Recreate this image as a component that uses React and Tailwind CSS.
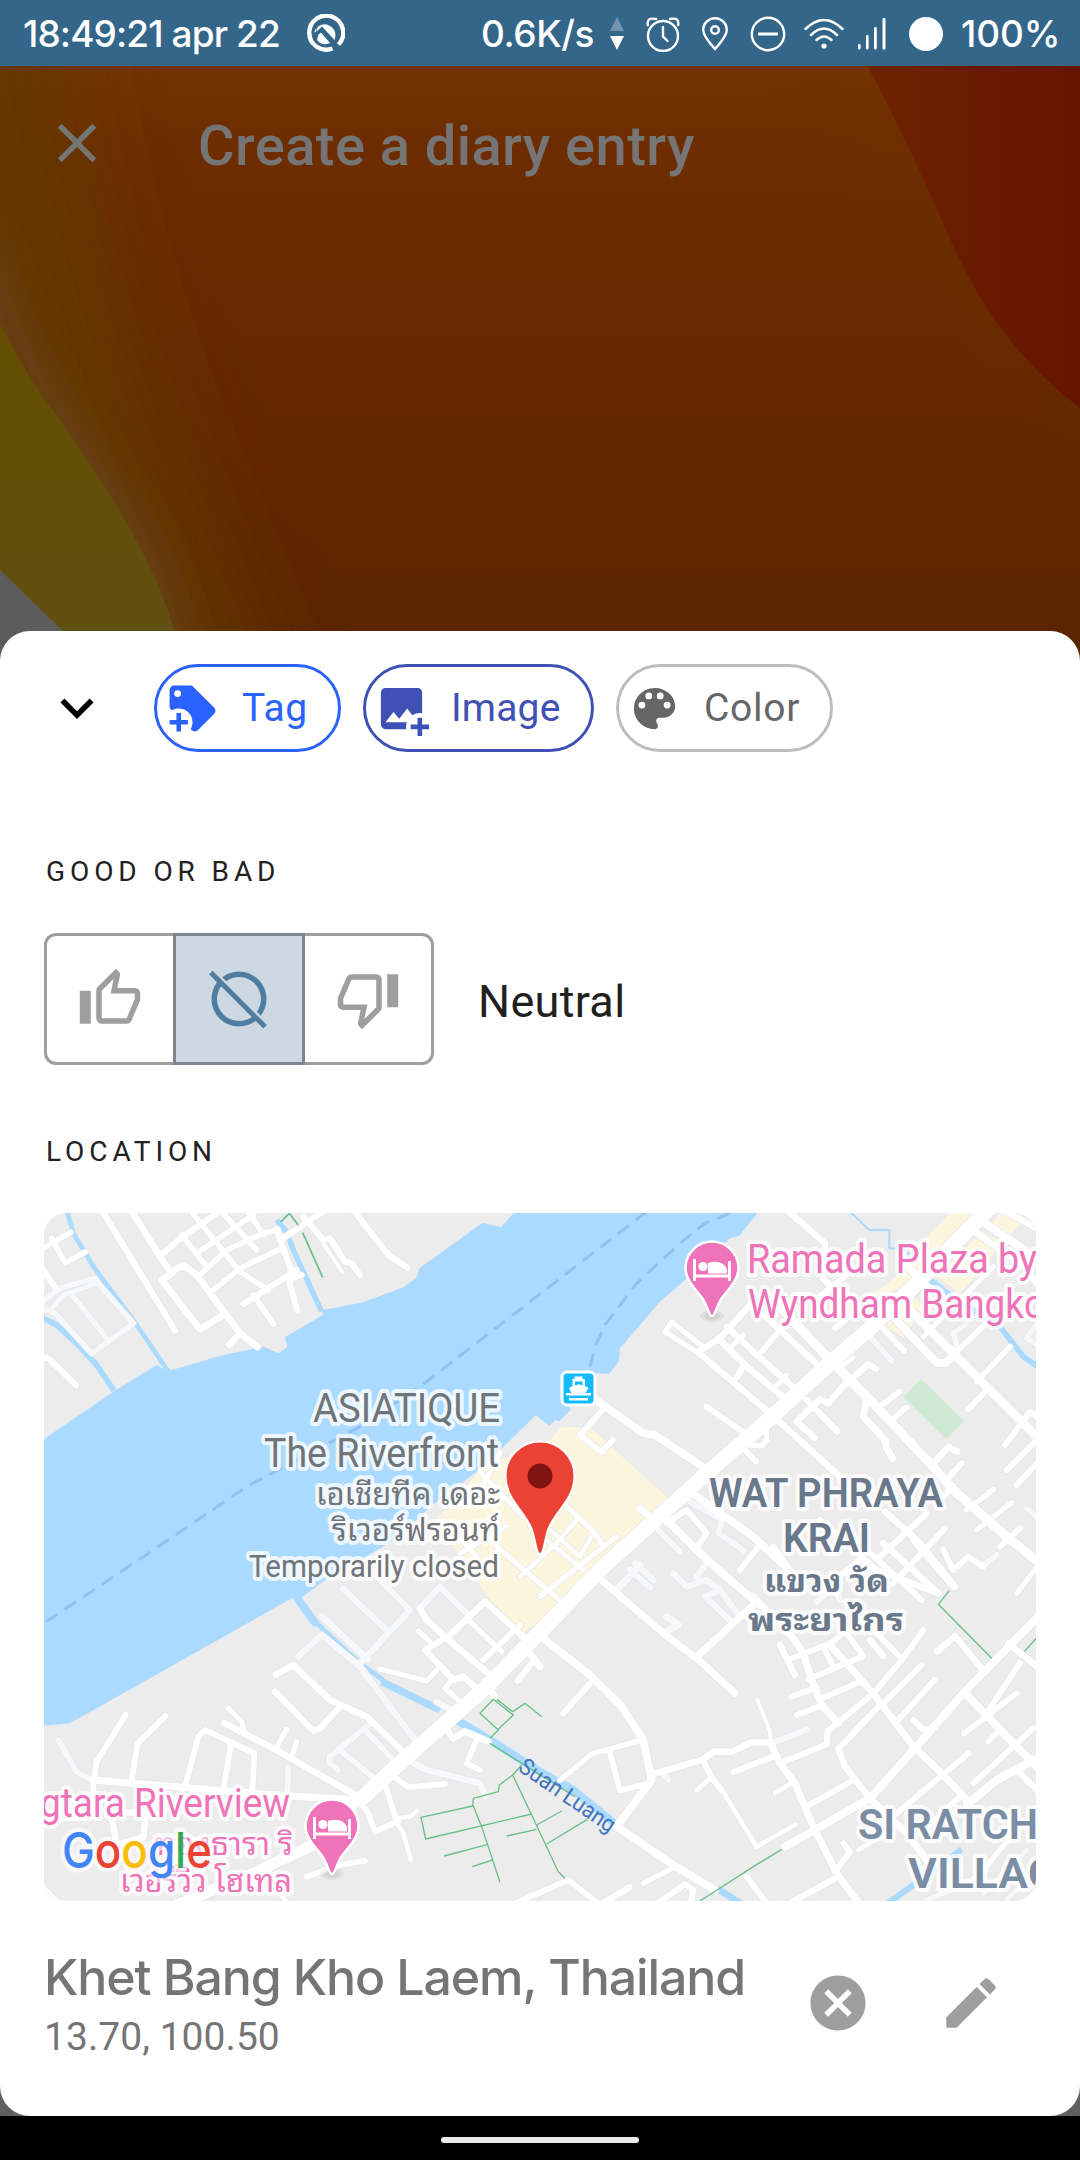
import React from "react";

const ICONS = {
  tagPlus:
    "M21.41,11.58L12.41,2.58C12.04,2.21 11.53,2 11,2H4A2,2 0 0,0 2,4V11C2,11.53 2.21,12.04 2.59,12.41L3,12.81C3.9,12.27 4.94,12 6,12A6,6 0 0,1 12,18C12,19.06 11.72,20.09 11.18,21L11.58,21.4C11.95,21.78 12.47,22 13,22C13.53,22 14.04,21.79 14.41,21.41L21.41,14.41C21.79,14.04 22,13.53 22,13C22,12.47 21.79,11.96 21.41,11.58M5.5,7A1.5,1.5 0 0,1 4,5.5A1.5,1.5 0 0,1 5.5,4A1.5,1.5 0 0,1 7,5.5A1.5,1.5 0 0,1 5.5,7M10,19H7V22H5V19H2V17H5V14H7V17H10V19Z",
  imagePlus:
    "M5,3A2,2 0 0,0 3,5V19A2,2 0 0,0 5,21H14.09C14.03,20.67 14,20.34 14,20C14,19.32 14.12,18.64 14.35,18H5L8.5,13.5L11,16.5L14.5,12L16.73,14.97C17.7,14.34 18.84,14 20,14C20.34,14 20.67,14.03 21,14.09V5C21,3.89 20.1,3 19,3H5M19,16V19H16V21H19V24H21V21H24V19H21V16H19Z",
  palette:
    "M17.5,12A1.5,1.5 0 0,1 16,10.5A1.5,1.5 0 0,1 17.5,9A1.5,1.5 0 0,1 19,10.5A1.5,1.5 0 0,1 17.5,12M14.5,8A1.5,1.5 0 0,1 13,6.5A1.5,1.5 0 0,1 14.5,5A1.5,1.5 0 0,1 16,6.5A1.5,1.5 0 0,1 14.5,8M9.5,8A1.5,1.5 0 0,1 8,6.5A1.5,1.5 0 0,1 9.5,5A1.5,1.5 0 0,1 11,6.5A1.5,1.5 0 0,1 9.5,8M6.5,12A1.5,1.5 0 0,1 5,10.5A1.5,1.5 0 0,1 6.5,9A1.5,1.5 0 0,1 8,10.5A1.5,1.5 0 0,1 6.5,12M12,3A9,9 0 0,0 3,12A9,9 0 0,0 12,21A1.5,1.5 0 0,0 13.5,19.5C13.5,19.11 13.35,18.76 13.11,18.5C12.88,18.23 12.73,17.88 12.73,17.5A1.5,1.5 0 0,1 14.23,16H16A5,5 0 0,0 21,11C21,6.58 16.97,3 12,3Z",
  thumbUp:
    "M5,9V21H1V9H5M9,21A2,2 0 0,1 7,19V9C7,8.45 7.22,7.95 7.59,7.59L14.17,1L15.23,2.06C15.5,2.33 15.67,2.7 15.67,3.11L15.64,3.43L14.69,8H21C22.11,8 23,8.9 23,10V12C23,12.26 22.95,12.5 22.86,12.73L19.84,19.78C19.54,20.5 18.83,21 18,21H9M9,19H18.03L21,12V10H12.21L13.34,4.68L9,9.03V19Z",
  thumbDown:
    "M19,15V3H23V15H19M15,3A2,2 0 0,1 17,5V15C17,15.55 16.78,16.05 16.41,16.41L9.83,23L8.77,21.94C8.5,21.67 8.33,21.3 8.33,20.88L8.36,20.57L9.31,16H3C1.89,16 1,15.1 1,14V12C1,11.74 1.05,11.5 1.14,11.27L4.16,4.22C4.46,3.5 5.17,3 6,3H15M15,5H5.97L3,12V14H11.78L10.65,19.32L15,14.97V5Z",
  circleOff:
    "M20.84 22.73L18.09 20C16.39 21.23 14.28 22 12 22C6.5 22 2 17.5 2 12C2 9.72 2.77 7.61 4 5.91L1.11 3L2.39 1.73L22.11 21.46L20.84 22.73M12 20C13.73 20 15.33 19.44 16.64 18.5L5.5 7.36C4.56 8.67 4 10.27 4 12A8 8 0 0 0 12 20M12 4C16.42 4 20 7.58 20 12C20 13.73 19.44 15.33 18.5 16.64L19.94 18.09C21.23 16.39 22 14.28 22 12C22 6.5 17.5 2 12 2C9.72 2 7.61 2.77 5.91 4.06L7.36 5.5C8.67 4.56 10.27 4 12 4Z",
  closeCircle:
    "M12,2C17.53,2 22,6.47 22,12C22,17.53 17.53,22 12,22C6.47,22 2,17.53 2,12C2,6.47 6.47,2 12,2M15.59,7L12,10.59L8.41,7L7,8.41L10.59,12L7,15.59L8.41,17L12,13.41L15.59,17L17,15.59L13.41,12L17,8.41L15.59,7Z",
  pencil:
    "M20.71,7.04C21.1,6.65 21.1,6 20.71,5.63L18.37,3.29C18,2.9 17.35,2.9 16.96,3.29L15.12,5.12L18.87,8.87M3,17.25V21H6.75L17.81,9.93L14.06,6.18L3,17.25Z",
  chevronDown: "M7.41,8.58L12,13.17L16.59,8.58L18,10L12,16L6,10L7.41,8.58Z",
  close: "M19,6.41L17.59,5L12,10.59L6.41,5L5,6.41L10.59,12L5,17.59L6.41,19L12,13.41L17.59,19L19,17.59L13.41,12L19,6.41Z",
};

function Icon({ name, className }) {
  return (
    <svg viewBox="0 0 24 24" fill="currentColor" className={className}>
      <path d={ICONS[name]} />
    </svg>
  );
}

function StatusBar() {
  return (
    <header className="flex h-[66px] shrink-0 items-center bg-[#34668a] pt-px font-['Inter'] text-[37px] font-[550] text-white">
      <span className="ml-[23px] w-[262px] whitespace-nowrap tracking-[-0.9px]">18:49:21 apr 22</span>
      <svg viewBox="0 0 40 40" className="ml-5 size-10" fill="none" stroke="#fff">
        <path d="M27.5 34.5 A17 17 0 1 1 33.5 30.5" strokeWidth="4.4" />
        <g fill="#fff" stroke="none">
          <path d="M12.5 13 A11 11 0 0 1 30.5 22 L29.5 26 L17 12.5 L11.5 17.5 Z" />
          <path d="M13.5 20.5 L16 18.5 L25 29 Q17 32.5 12 26 Z" />
          <path d="M9.2 18.5 Q10 15 11.6 14.2 L10.8 18Z" />
        </g>
      </svg>
      <span className="ml-[136px] w-[115px] whitespace-nowrap tracking-[-0.4px]">0.6K/s</span>
      <svg viewBox="0 0 14 34" className="ml-[14px] h-[34px] w-[14px]" fill="#fff">
        <path d="M7 0 L14 14 H0Z" opacity=".3" />
        <path d="M0 19 H14 L7 33Z" />
      </svg>
      <svg viewBox="0 0 34 36" className="ml-[22px] h-9 w-[34px]" fill="none" stroke="#fff" strokeWidth="2.4" strokeLinecap="round">
        <circle cx="17" cy="20" r="15" />
        <path d="M17 11 V20.5 L21.5 25 M1.8 9 Q0.5 1 10 3 M32.2 9 Q33.5 1 24 3" />
      </svg>
      <svg viewBox="0 0 26 34" className="ml-[22px] h-[34px] w-[26px]" fill="none" stroke="#fff" strokeWidth="2.4">
        <path d="M13 32 Q1.2 19 1.2 13 A11.8 11.8 0 0 1 24.8 13 Q24.8 19 13 32Z" />
        <circle cx="13" cy="13" r="3.8" />
      </svg>
      <svg viewBox="0 0 36 36" className="ml-[22px] size-9" fill="none" stroke="#fff" strokeWidth="2.4">
        <circle cx="18" cy="18" r="16.2" />
        <path d="M8 18 H28" strokeWidth="3" />
      </svg>
      <svg viewBox="0 0 40 32" className="ml-[18px] h-8 w-10" fill="none" stroke="#fff" strokeWidth="2.5" strokeLinecap="round">
        <path d="M1.5 11 Q20 -7 38.500 11 M7 17 Q20 4 33 17 M12.500 22 Q20 15 27.500 22" />
        <circle cx="20" cy="28" r="2.6" fill="#fff" stroke="none" />
      </svg>
      <svg viewBox="0 0 28 32" className="ml-[14px] h-8 w-7" fill="#fff">
        <rect y="26" width="2.600" height="5.500" rx="1" />
        <rect x="8" y="17" width="2.600" height="14.500" rx="1" />
        <rect x="16" y="9" width="2.800" height="22.500" rx="1" />
        <rect x="24.500" y="0" width="3" height="31.500" rx="1" />
      </svg>
      <span className="ml-[23px] size-[34px] rounded-full bg-white" />
      <span className="ml-[18px] whitespace-nowrap tracking-[-0.1px]">100%</span>
    </header>
  );
}

function HeroArt() {
  return (
    <svg viewBox="0 66 1080 620" className="absolute inset-0 h-[620px] w-[1080px]">
      <defs>
        <linearGradient id="base" x1="0" y1="0" x2="0" y2="1">
          <stop offset="0" stopColor="#733300" />
          <stop offset=".12" stopColor="#6d2d00" />
          <stop offset=".6" stopColor="#642800" />
          <stop offset="1" stopColor="#5a2400" />
        </linearGradient>
        <linearGradient id="left" x1="0" y1="0" x2="1" y2="0">
          <stop offset="0" stopColor="#683c00" />
          <stop offset="1" stopColor="#683c00" stopOpacity="0" />
        </linearGradient>
        <linearGradient id="right" x1="0" y1="0" x2="0.8" y2="-0.5">
          <stop offset="0.3" stopColor="#6c3300" stopOpacity="0" />
          <stop offset="1" stopColor="#6c3300" stopOpacity=".7" />
        </linearGradient>
        <linearGradient id="red" x1="0" y1="0" x2="1" y2="0">
          <stop offset="0" stopColor="#6e2400" />
          <stop offset=".5" stopColor="#691b00" />
          <stop offset="1" stopColor="#661400" />
        </linearGradient>
        <linearGradient id="olive" x1="0" y1="0" x2="0" y2="1">
          <stop offset="0" stopColor="#634e00" />
          <stop offset="1" stopColor="#605014" />
        </linearGradient>
        <filter id="soft" x="-100%" y="-40%" width="300%" height="180%">
          <feGaussianBlur stdDeviation="48" />
        </filter>
        <filter id="softer" x="-80%" y="-20%" width="260%" height="140%">
          <feGaussianBlur stdDeviation="20" />
        </filter>
      </defs>
      <rect y="66" width="1080" height="620" fill="url(#base)" />
      <rect x="540" y="66" width="540" height="400" fill="url(#right)" />
      <path d="M-40 -60 Q0 240 80 440 T230 800" fill="none" stroke="#633800" strokeWidth="150" filter="url(#soft)" />
      <path d="M-24 240 Q-5 327 36 393 T122 527 Q160 580 170 690" fill="none" stroke="#6a421f" strokeWidth="34" filter="url(#softer)" />
      <path d="M0 323 C20 365 38 390 60 420 C105 485 155 560 174 631 L182 690 H0Z" fill="url(#olive)" />
      <path d="M0 570 L63 631 L120 690 H0Z" fill="#5c5c5c" />
      <path d="M867 66 C893 112 912 155 933 200 C958 258 990 340 1080 408 V66Z" fill="url(#red)" />
    </svg>
  );
}

const TILES = [
  {
    x: 40,
    y: 1200,
    canals: [
      [14, "80,30 100,100 160,200 280,360 385,515"],
      [17, "0,350 50,375 110,430 170,495 222,572"],
      [16, "710,60 740,95 760,150 845,335"],
    ],
    faint: [
      [17, "0,310 60,265 165,235 175,250 280,370 205,425 155,460 45,340 0,322"],
      [15, "35,325 70,285 170,250"],
      [17, "100,290 205,420"],
    ],
    roads: [
      [19, "185,30 405,392"],
      [21, "270,25 360,170 395,220 365,240 480,388 545,348"],
      [21, "395,215 430,195 470,225 600,400 652,440"],
      [19, "600,400 567,435"],
      [19, "360,168 425,112 560,20"],
      [17, "425,105 500,200"],
      [17, "450,30 600,215 685,270"],
      [17, "540,30 650,150"],
      [17, "620,30 672,105"],
      [17, "470,160 640,45"],
      [17, "480,225 560,150 670,100 715,90"],
      [17, "515,275 600,205 725,145"],
      [19, "610,312 770,210"],
      [18, "640,285 700,372"],
      [19, "710,88 730,145 752,205 748,245 772,333"],
      [17, "745,240 785,225"],
      [19, "720,120 790,75 870,20"],
      [19, "790,50 850,120 870,115 915,185 935,190 960,225"],
      [12, "850,130 907,216"],
      [19, "940,30 1045,165 1102,203"],
      [17, "0,150 92,97"],
      [17, "35,115 75,188 135,156"],
      [19, "0,195 45,262"],
      [19, "0,470 25,475 108,556"],
      [15, "1210,960 1310,1070"],
      [15, "1320,815 1450,950"],
      [15, "1260,1060 1400,980"],
      [15, "1250,920 1330,855 1380,760"],
    ],
    paths: [[5, "722,66 748,40 775,76"], [5, "788,98 848,232"]],
  },
  {
    x: 540,
    y: 1200,
    canals: [
      [6, "930,35 988,90 1048,90 1048,145 1105,150 1105,200 1135,220"],
      [17, "1170,240 1250,300 1380,380 1450,470 1500,505"],
    ],
    faint: [
      [18, "990,410 1055,482"],
      [18, "450,905 545,960 535,1000 612,1052"],
      [18, "355,990 420,1055"],
      [16, "1235,460 1250,430 1240,400 1280,370"],
      [16, "1488,375 1460,415 1500,440"],
      [16, "1460,925 1500,960"],
    ],
    roads: [
      [46, "1380,-10 1110,270 990,385 880,480 690,655 500,820 340,965 190,1100 45,1250 -160,1460 -410,1680 -540,1800"],
      [34, "-540,1790 -680,1935 -850,2015 -1100,2120"],
      [20, "735,25 855,130 848,235 880,265"],
      [16, "480,462 375,395 395,366 492,442"],
      [20, "480,462 690,640 900,830"],
      [20, "480,452 540,415 635,310"],
      [20, "535,415 620,500 740,600"],
      [20, "560,380 640,455 775,575"],
      [20, "640,315 860,520"],
      [18, "665,455 720,390"],
      [16, "575,440 610,405"],
      [20, "590,532 612,495"],
      [16, "712,555 740,525"],
      [28, "700,300 890,500 1000,610 1170,790 1240,870 1400,1010 1500,1090"],
      [18, "885,385 1000,290"],
      [18, "840,290 930,215"],
      [24, "1040,330 1190,488 1215,490 1240,465"],
      [26, "1080,170 1160,260"],
      [26, "1110,330 1240,460 1340,560 1500,720"],
      [17, "1215,488 1335,373"],
      [15, "1150,410 1200,360 1300,260 1360,200"],
      [20, "1310,100 1440,190 1500,260"],
      [24, "1320,60 1500,180"],
      [20, "1380,25 1500,90"],
      [17, "1310,545 1410,440"],
      [18, "1340,570 1285,628"],
      [18, "1020,375 1092,452"],
      [20, "915,555 985,492 1008,507"],
      [20, "920,545 865,610 840,597 770,665 825,715"],
      [20, "800,600 892,695"],
      [14, "895,505 940,472"],
      [22, "978,605 970,650 1035,720 1040,745 1058,775"],
      [18, "1020,620 1078,575"],
      [18, "1055,660 1100,622"],
      [18, "500,620 630,710"],
      [17, "630,735 665,738 680,720 678,690"],
      [18, "615,750 648,785"],
      [24, "160,595 310,700 345,705 510,815"],
      [18, "190,628 120,705 185,757 218,720"],
      [22, "300,925 350,970"],
      [20, "1185,785 1225,740 1252,755"],
      [18, "1225,835 1265,790"],
      [18, "1240,858 1205,895"],
      [16, "1310,990 1415,908"],
      [16, "1280,930 1360,868"],
      [18, "1395,735 1470,635 1500,660"],
      [18, "1400,810 1500,710"],
      [18, "1430,855 1500,780"],
      [24, "465,885 640,1010 720,1085 790,1150"],
      [24, "380,960 470,1050 570,1140 660,1215"],
      [18, "380,970 440,930 500,1000 475,1035"],
      [18, "600,1110 660,1035"],
      [20, "1035,935 1140,1030 1245,1160"],
      [20, "840,960 1010,1110 1195,1180"],
      [20, "1160,940 1020,1070"],
      [18, "1215,985 1060,1150"],
      [18, "1380,1040 1440,985"],
      [16, "60,900 165,1000 190,1040"],
      [14, "-30,980 130,1110"],
      [16, "-130,1040 70,1210"],
      [14, "-60,1130 50,1030 110,960"],
      [16, "0,1190 230,1010"],
      [14, "20,980 120,1070 160,1000"],
    ],
    paths: [],
  },
  {
    x: 40,
    y: 1550,
    canals: [
      [24, "768,140 830,225"],
      [14, "825,215 960,340 1030,390"],
      [22, "1025,395 1200,480"],
      [24, "1250,510 1350,570 1500,665 1600,720 1735,830"],
    ],
    faint: [
      [20, "775,320 845,255 960,350 1140,590"],
      [20, "845,198 985,330"],
      [20, "908,116 1045,245"],
      [20, "1010,80 1110,180 1045,250 955,345"],
      [20, "1190,455 1250,490"],
      [18, "985,525 870,620 870,640 893,660"],
      [18, "905,605 1010,690"],
      [18, "975,540 1070,640"],
      [18, "55,570 110,665 155,690"],
      [18, "745,655 742,730"],
      [20, "1120,640 1160,660 1320,700 1337,738"],
      [20, "1280,190 1200,110 1140,175"],
    ],
    roads: [
      [16, "1135,243 1170,275"],
      [20, "1140,175 1160,210 1250,290 1350,375"],
      [20, "1335,155 1230,255 1155,300 1240,390 1270,380 1310,415"],
      [16, "1240,385 1215,415 1265,460"],
      [16, "1200,350 1160,393 1020,357"],
      [20, "1335,155 1460,270"],
      [16, "1280,205 1385,305"],
      [18, "1330,330 1440,225"],
      [22, "1460,300 1500,350"],
      [18, "1475,340 1432,393"],
      [22, "1335,395 1365,440"],
      [20, "1205,520 1240,565 1275,545 1345,575"],
      [18, "1310,570 1280,640 1320,660"],
      [20, "708,374 760,345 870,450 980,500 1105,620"],
      [20, "705,425 820,543 840,535 905,465"],
      [20, "553,520 700,595 950,738"],
      [16, "565,475 605,515 612,545"],
      [16, "740,538 705,600"],
      [16, "770,575 755,620"],
      [18, "162,690 170,635 257,494"],
      [18, "275,690 293,580 377,498"],
      [22, "160,690 430,712 700,735 960,750"],
      [18, "435,710 475,560 495,540 643,610 637,725"],
      [18, "573,580 550,722"],
      [18, "160,690 160,800 0,810"],
      [20, "215,800 230,885 310,862 318,790 200,785"],
      [18, "1055,675 1105,712 1215,702"],
      [18, "1030,690 1072,820"],
      [14, "1070,820 1090,850 1113,930"],
      [18, "965,760 985,790 1005,845 1075,812"],
      [14, "1070,805 1110,800 1130,783"],
      [18, "800,980 900,945 975,932"],
      [12, "0,1000 60,1060"],
      [18, "1425,1060 1585,990 1680,1065"],
      [14, "720,1030 750,1070"],
    ],
    paths: [
      [4, "1350,565 1375,540 1320,490 1360,448 1420,495 1375,538"],
      [4, "1370,448 1418,485 1455,460 1505,500"],
      [4, "1350,580 1605,740"],
      [4, "1445,645 1418,675 1378,705 1375,725 1300,745 1298,768 1143,802 1157,867 1475,792"],
      [4, "1300,768 1325,830 1380,997"],
      [4, "1418,675 1475,795 1555,965 1575,985"],
      [4, "1212,918 1342,884"],
      [4, "1297,950 1358,930"],
      [4, "1400,858 1490,838"],
      [4, "1490,825 1565,783"],
      [4, "1520,882 1642,808"],
    ],
  },
  {
    x: 540,
    y: 1550,
    canals: [
      [20, "530,1015 610,1065"],
      [18, "1040,1062 1120,1005 1265,898"],
    ],
    faint: [
      [22, "235,115 300,45"],
      [20, "270,60 330,112"],
      [20, "285,40 340,90"],
      [20, "400,70 440,110 500,90 540,120 495,140 570,212"],
      [20, "470,80 500,40"],
      [20, "540,120 595,195"],
      [22, "380,200 415,225 370,250"],
      [20, "830,155 880,110 900,150"],
      [18, "700,577 803,538"],
      [18, "370,670 385,690"],
      [18, "1325,50 1370,15"],
      [16, "1160,1050 1260,1010 1340,960"],
      [16, "1330,1030 1460,900"],
      [14, "1400,1050 1490,960"],
    ],
    roads: [
      [24, "-10,250 150,375 245,470 310,570 335,690 230,830 400,945 525,1020"],
      [22, "190,95 370,250 470,325 585,430"],
      [22, "470,320 640,165"],
      [22, "640,140 760,265 790,310 815,390 845,465 895,520"],
      [18, "160,390 70,490"],
      [16, "300,572 155,612 60,690"],
      [18, "208,600 240,722 325,700"],
      [20, "340,672 490,628 520,605 575,605 635,577 690,577"],
      [12, "652,450 690,545 692,580"],
      [22, "690,575 720,640 765,700 820,830 890,970 960,1065"],
      [18, "488,630 520,690 545,720"],
      [14, "540,710 650,890 765,825"],
      [16, "472,720 512,683"],
      [18, "580,666 700,620"],
      [18, "730,635 860,583 862,545 1000,430 1085,330 1150,240"],
      [24, "735,890 990,745 1120,600 1270,430 1420,275 1510,185"],
      [20, "1020,465 895,597 915,650 990,745"],
      [20, "720,285 765,375"],
      [18, "750,328 870,280 950,220"],
      [18, "805,388 970,318 920,250"],
      [18, "850,290 880,350"],
      [18, "755,440 830,412"],
      [18, "840,448 960,395"],
      [18, "770,495 850,465"],
      [22, "870,285 1000,430 1120,590 1200,665 1290,760"],
      [18, "800,770 940,690"],
      [14, "705,730 760,697"],
      [18, "1070,515 1183,390"],
      [18, "1030,460 1145,345"],
      [18, "1085,325 1010,250"],
      [20, "990,270 1030,318"],
      [20, "1190,305 1245,258 1335,368"],
      [24, "1275,430 1430,590 1500,660"],
      [18, "1272,550 1430,430"],
      [18, "1340,490 1440,338"],
      [18, "1345,575 1380,540"],
      [18, "1120,510 1150,538 1175,538"],
      [26, "1280,765 1370,690 1500,620"],
      [18, "1070,790 1285,610"],
      [18, "1260,740 1140,850"],
      [20, "1405,280 1510,365"],
      [18, "1300,700 1480,535"],
      [20, "1440,670 1510,740"],
      [22, "990,745 1100,850 1160,930"],
      [18, "910,880 930,905 885,965"],
      [14, "955,900 1020,860"],
      [18, "620,980 680,1060"],
      [20, "895,980 740,1065"],
      [16, "310,1000 400,953"],
      [18, "350,1062 435,1003 460,1020 450,1065"],
      [20, "180,1065 268,1012"],
      [20, "1120,-30 1240,110"],
      [20, "1030,-20 1195,130"],
      [18, "980,0 1145,150"],
      [18, "1210,0 1240,60 1285,20 1330,50"],
      [16, "1430,130 1500,40"],
      [20, "960,30 860,110"],
      [18, "700,-10 750,60"],
      [16, "1330,960 1430,840 1500,790"],
    ],
    paths: [
      [4, "1228,122 1195,163 1355,325"],
      [4, "1500,252 1453,305"],
      [4, "725,898 640,950 480,1053"],
    ],
  },
];

function Lines({ kind, color, extra = 0, cap = "round" }) {
  return TILES.map((tile, i) => (
    <g
      key={i}
      transform={`translate(${tile.x} ${tile.y}) scale(.33333)`}
      fill="none"
      stroke={color}
      strokeLinecap={cap}
      strokeLinejoin="round"
    >
      {tile[kind].map(([w, points], j) => (
        <polyline key={j} points={points} strokeWidth={w + extra} />
      ))}
    </g>
  ));
}

function Label({ x, y, w, size, color, weight = 400, anchor = "start", children, opacity = 0.8 }) {
  return (
    <text
      x={x}
      y={y}
      textLength={w}
      lengthAdjust="spacingAndGlyphs"
      textAnchor={anchor}
      fontSize={size}
      fontWeight={weight}
      fill={color}
      stroke="#fff"
      strokeOpacity={opacity}
      strokeWidth="8"
      strokeLinejoin="round"
      paintOrder="stroke"
      fontFamily='Roboto, "Noto Sans Thai Looped", "Noto Looped Thai", Waree, Loma, Garuda, "Noto Sans Thai", sans-serif'
    >
      {children}
    </text>
  );
}

function HotelPin({ x, y }) {
  return (
    <g transform={`translate(${x} ${y})`}>
      <ellipse cx="0" cy="48" rx="12" ry="6" fill="#000" opacity=".05" />
      <ellipse cx="0" cy="48" rx="8" ry="4" fill="#000" opacity=".06" />
      <path
        d="M0 48 C-3 48 -4 40 -8 33 C-13 24 -26.500 14 -26.500 0 A26.500 26.500 0 0 1 26.500 0 C26.500 14 13 24 8 33 C4 40 3 48 0 48Z"
        fill="#ef73b8"
        stroke="#fff"
        strokeWidth="2.5"
      />
      <path d="M-17.500 -9 V13 M17.500 -7 V13 M-17.500 8 H17.500" stroke="#fff" strokeWidth="2.800" fill="none" />
      <circle cx="-9" cy="-1.500" r="4.600" fill="#fff" />
      <path d="M-4 5.500 V-5 Q10 -9 15 1 V5.500Z" fill="#fff" />
    </g>
  );
}

function MapView() {
  return (
    <svg viewBox="44 1213 992 688" className="block h-[688px] w-[992px]">
      <rect x="44" y="1213" width="992" height="688" fill="#ececec" />
      <g transform="translate(40 1200) scale(.33333)">
        <path
          fill="#aadaff"
          d="M2160 30 L2097 108 L2070 115 L1935 240 L1860 305 L1740 445 L1736 485 L1707 522 L1665 520 L1590 620 L1528 677 L1488 645 L1330 800 L1170 920 L1080 1010 L850 1144 L783 1194 L757 1194 L90 1570 L0 1578 L0 725 L225 572 L350 495 L375 510 L395 510 L550 465 L670 440 L715 460 L742 442 L735 412 L848 345 L848 330 L965 308 L1090 262 L1128 235 L1140 203 L1328 68 L1383 82 L1430 30Z"
        />
        <path
          fill="#fdf6de"
          d="M1190 960 L1330 800 L1530 720 L1565 682 L1650 682 L1895 905 L1845 950 L1820 1000 L1720 1105 L1620 1180 L1450 1298 L1350 1200Z M2740 30 L2830 30 L2640 250 L2490 290 L2580 220 L2660 110Z M2885 35 L2945 70 L2905 110 L2845 80Z M2825 95 L2890 125 L2760 280 L2690 230Z M2620 290 L2650 320 L2590 412 L2535 375Z"
        />
        <path fill="#ceead2" d="M2643 537 L2772 662 L2718 717 L2590 590Z" />
        <g fill="none" stroke="#93c0f2" strokeWidth="9" strokeDasharray="42 25">
          <path d="M1820 35 L1140 560 L960 680 L620 860 L340 1050 L20 1264" />
          <path d="M2070 40 L1995 70 L1920 130 L1790 250 L1695 375 L1665 440 L1650 500" />
        </g>
        <path d="M1590 625 L1552 662" stroke="#aadaff" strokeWidth="10" />
      </g>
      <Lines kind="canals" color="#aadaff" cap="butt" />
      <Lines kind="faint" color="#e0e2e8" extra={3} />
      <Lines kind="roads" color="#dfe1e5" extra={3} />
      <Lines kind="faint" color="#f7f8fb" />
      <Lines kind="roads" color="#ffffff" />
      <Lines kind="paths" color="#69c086" cap="butt" />

      <g transform="translate(563.500 1373.500)">
        <rect x="-1.500" y="-1.500" width="33" height="33" rx="5" fill="#13bcff" stroke="#fff" strokeWidth="3" />
        <path
          fill="#fff"
          fillRule="evenodd"
          d="M11 3 H19 V5.500 H21.500 V12.500 L25 14.500 L22 19.500 H27.500 V22 H2.500 V19.500 H8 L5.500 14.500 L9 12.500 V5.500 H11Z M11.500 8 V12 L15.200 10.800 L19 12 V8Z M5.500 24.500 H24.500 V27 H5.500Z"
        />
      </g>

      <Label x={500} y={1422} w={187} size={41} color="#70757a" anchor="end">ASIATIQUE</Label>
      <Label x={499} y={1467} w={235} size={41} color="#70757a" anchor="end">The Riverfront</Label>
      <Label x={500} y={1505} w={184} size={31} color="#70757a" anchor="end">เอเชียทีค เดอะ</Label>
      <Label x={500} y={1541} w={168} size={31} color="#70757a" anchor="end">ริเวอร์ฟรอนท์</Label>
      <Label x={499} y={1577} w={250} size={32} color="#70757a" anchor="end">Temporarily closed</Label>

      <Label x={747} y={1273} w={290} size={41} color="#ef73b8">Ramada Plaza by</Label>
      <Label x={748} y={1318} w={297} size={41} color="#ef73b8">Wyndham Bangko</Label>
      <Label x={709} y={1507} w={234} size={41} weight={600} color="#69788a">WAT PHRAYA</Label>
      <Label x={783} y={1552} w={87} size={41} weight={600} color="#69788a">KRAI</Label>
      <Label x={764} y={1592} w={125} size={32} weight={700} color="#69788a">แขวง วัด</Label>
      <Label x={748} y={1631} w={156} size={32} weight={700} color="#69788a">พระยาไกร</Label>
      <Label x={858} y={1839} w={180} size={43} weight={600} color="#7b8ca5">SI RATCH</Label>
      <Label x={908} y={1888} w={150} size={43} weight={600} color="#7b8ca5">VILLAG</Label>

      <Label x={290} y={1817} w={250} size={41} color="#ef73b8" anchor="end">gtara Riverview</Label>
      <Label x={293} y={1855} w={138} size={31} color="#ef73b8" anchor="end">ทองธารา ริ</Label>
      <Label x={292} y={1892} w={172} size={31} color="#ef73b8" anchor="end">เวอร์วิว โฮเทล</Label>

      <text
        transform="translate(517 1770) rotate(34.500)"
        fontFamily="Roboto, sans-serif"
        fontSize="23"
        fill="#3f74c0"
        textLength="112"
        lengthAdjust="spacingAndGlyphs"
      >
        Suan Luang
      </text>

      <HotelPin x={712} y={1268} />
      <HotelPin x={332} y={1826} />

      <path
        d="M540 1554 C536 1554 536 1542 532 1530 C526 1512 505.500 1500 505.500 1476 A34.500 34.500 0 0 1 574.500 1476 C574.500 1500 554 1512 548 1530 C544 1542 544 1554 540 1554Z"
        fill="#ea4335"
        stroke="#fff"
        strokeWidth="2"
      />
      <circle cx="540" cy="1476" r="12.500" fill="#811411" />

      <text
        x="62"
        y="1868"
        textLength="150"
        lengthAdjust="spacingAndGlyphs"
        fontFamily="Inter, sans-serif"
        fontWeight="500"
        fontSize="49"
        stroke="#fff"
        strokeOpacity=".6"
        strokeWidth="9"
        strokeLinejoin="round"
        paintOrder="stroke"
      >
        <tspan fill="#4285f4">G</tspan>
        <tspan fill="#ea4335">o</tspan>
        <tspan fill="#fbbc04">o</tspan>
        <tspan fill="#4285f4">g</tspan>
        <tspan fill="#34a853">l</tspan>
        <tspan fill="#ea4335">e</tspan>
      </text>
    </svg>
  );
}

function SectionTitle({ children }) {
  return <h2 className="ml-[46px] h-10 text-[28px] leading-[42px] tracking-[4.9px] text-[#212121]">{children}</h2>;
}

export default function App() {
  return (
    <div className="relative flex h-[2160px] w-[1080px] flex-col overflow-hidden bg-[#5f5f5f] font-['Roboto']">
      <StatusBar />
      <section className="relative h-[565px] shrink-0">
        <HeroArt />
        <div className="relative flex items-start pt-[44px] text-[#757575]">
          <Icon name="close" className="ml-11 size-[66px]" />
          <h1 className="mt-px ml-[88px] text-[56px] leading-[70px] font-medium tracking-[0.45px]">Create a diary entry</h1>
        </div>
      </section>

      <main className="relative flex h-[1485px] shrink-0 flex-col rounded-[30px] bg-white">
        <div className="mt-[33px] flex h-[88px] items-center pl-11">
          <Icon name="chevronDown" className="mr-11 size-[66px] text-black" />
          <div className="mr-[22px] flex h-[88px] w-[187px] items-center rounded-full border-[3px] border-[#2962ff] pl-[8px] text-[#2962ff]">
            <Icon name="tagPlus" className="size-[55px]" />
            <span className="ml-[22px] text-[39px] tracking-[0.5px]">Tag</span>
          </div>
          <div className="mr-[22px] flex h-[88px] w-[231px] items-center rounded-full border-[3px] border-[#3f51b5] pl-[8px] text-[#3f51b5]">
            <Icon name="imagePlus" className="size-[55px]" />
            <span className="ml-[22px] text-[39px] tracking-[0.2px]">Image</span>
          </div>
          <div className="flex h-[88px] w-[217px] items-center rounded-full border-[3px] border-[#bdbdbd] pl-[8px] text-[#666666]">
            <Icon name="palette" className="size-[55px]" />
            <span className="ml-[22px] text-[39px] tracking-[0.7px]">Color</span>
          </div>
        </div>

        <div className="mt-[99px]">
          <SectionTitle>GOOD OR BAD</SectionTitle>
        </div>
        <div className="mt-[42px] flex h-[132px] items-center pl-11">
          <div className="flex h-[132px] w-[390px] text-[#9e9e9e]">
            <span className="flex w-[129px] items-center justify-center rounded-l-[12px] border-[3px] border-r-0 border-[#9e9e9e]">
              <Icon name="thumbUp" className="size-[66px]" />
            </span>
            <span className="flex w-[132px] items-center justify-center border-[3px] border-[#7d868e] bg-[#ccd8e2] text-[#4f7c9f]">
              <Icon name="circleOff" className="size-[66px]" />
            </span>
            <span className="flex w-[129px] items-center justify-center rounded-r-[12px] border-[3px] border-l-0 border-[#9e9e9e]">
              <Icon name="thumbDown" className="size-[66px]" />
            </span>
          </div>
          <span className="mt-[6px] ml-11 text-[45px] tracking-[0.3px] text-[#212121]">Neutral</span>
        </div>

        <div className="mt-[66px]">
          <SectionTitle>LOCATION</SectionTitle>
        </div>
        <div className="mt-[42px] ml-11 h-[688px] w-[992px] overflow-hidden rounded-[22px]">
          <MapView />
        </div>

        <div className="flex pl-11 text-[#757575]">
          <div className="w-[761px] pt-[46px]">
            <div className="font-['Inter'] text-[50px] leading-[60px] font-[550] tracking-[-1.1px] whitespace-nowrap">
              Khet Bang Kho Laem, Thailand
            </div>
            <div className="mt-[6px] text-[39px] leading-[48px] tracking-[0.05px]">13.70, 100.50</div>
          </div>
          <div className="mt-[69px] flex gap-[67px] text-[#9e9e9e]">
            <Icon name="closeCircle" className="size-[66px]" />
            <Icon name="pencil" className="size-[66px]" />
          </div>
        </div>
      </main>

      <nav className="flex h-11 shrink-0 items-center justify-center bg-black">
        <div className="mt-1 h-[6px] w-[198px] rounded-full bg-[#ebebeb]" />
      </nav>
    </div>
  );
}
